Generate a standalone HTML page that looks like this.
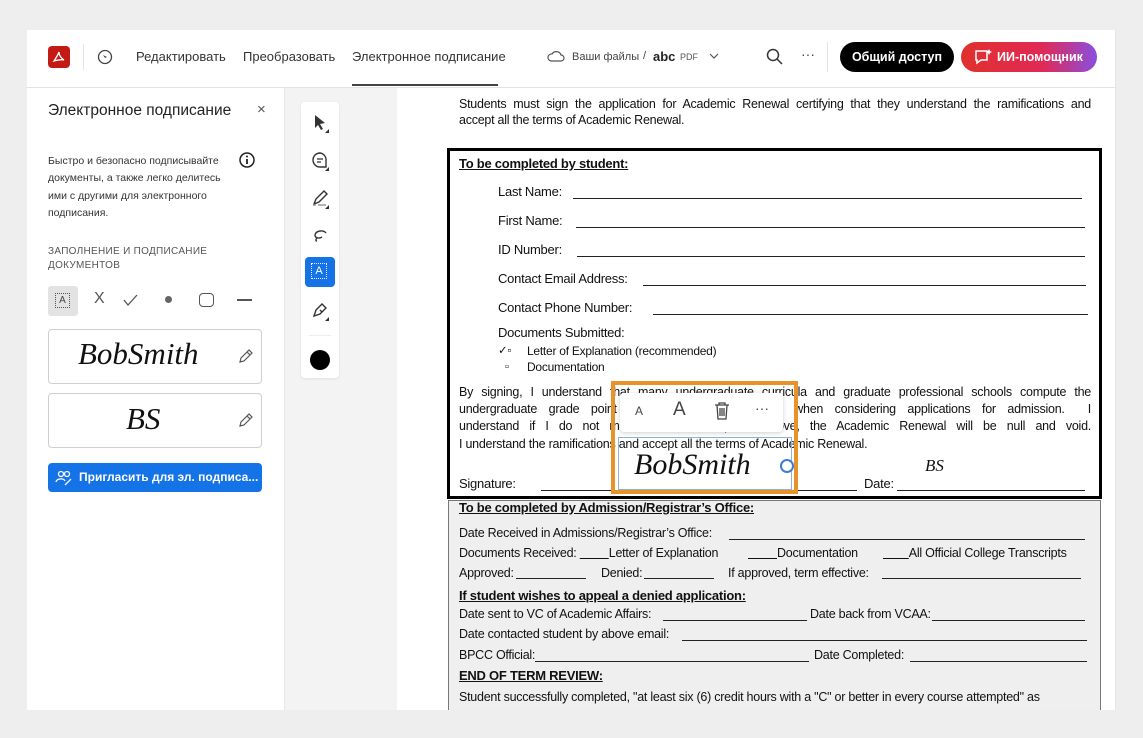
<!DOCTYPE html>
<html><head><meta charset="utf-8">
<style>
*{margin:0;padding:0;box-sizing:border-box}
body{width:1143px;height:738px;background:#eeeeee;font-family:"Liberation Sans",sans-serif;position:relative;overflow:hidden;color:#222}
.a{position:absolute;white-space:nowrap}
.d{position:absolute;white-space:nowrap;font-size:12.5px;letter-spacing:-0.25px;color:#111;line-height:14px}
.u{position:absolute;border-bottom:1px solid #222;height:1px}
.b{font-weight:bold;text-decoration:underline;font-size:13px}
.j{position:absolute;left:459px;width:632px;font-size:12.5px;letter-spacing:-0.25px;text-align:justify;text-align-last:justify;line-height:14px;color:#111;white-space:nowrap;overflow:hidden}
.sig{font-family:"Liberation Serif",serif;font-style:italic;color:#111}
</style></head><body>
<div class="a" style="left:27px;top:30px;width:1089px;height:680px;background:#fff"></div>
<!-- header -->
<div class="a" style="left:27px;top:87px;width:1089px;height:1px;background:#e3e3e3"></div>
<div class="a" style="left:48px;top:46px;width:22px;height:22px;background:#c41a14;border-radius:4px"></div>
<svg class="a" style="left:51px;top:49px" width="16" height="16" viewBox="0 0 16 16"><path d="M3 12c2-3 4-6 5-9 0 3 2 6 5 8-3-1-6 0-10 1z" fill="none" stroke="#fff" stroke-width="1.3"/></svg>
<div class="a" style="left:83px;top:44px;width:1px;height:26px;background:#e5e5e5"></div>
<svg class="a" style="left:97px;top:49px" width="16" height="16"><circle cx="8" cy="8" r="6.5" fill="none" stroke="#444" stroke-width="1.3"/><path d="M6 6l4 2-2 1z" fill="#444"/></svg>
<div class="a" style="left:136px;top:49px;font-size:13px;color:#333">Редактировать</div>
<div class="a" style="left:243px;top:49px;font-size:13px;color:#333">Преобразовать</div>
<div class="a" style="left:352px;top:49px;font-size:13px;color:#333">Электронное подписание</div>
<div class="a" style="left:352px;top:84px;width:146px;height:2px;background:#444"></div>
<svg class="a" style="left:546px;top:49px" width="20" height="14"><path d="M5 12h10a3 3 0 000-6 5 5 0 00-9-1 3.5 3.5 0 00-1 7z" fill="none" stroke="#555" stroke-width="1.2"/></svg>
<div class="a" style="left:572px;top:51px;font-size:11px;color:#444">Ваши файлы</div>
<div class="a" style="left:643px;top:50px;font-size:11px;color:#444">/</div>
<div class="a" style="left:653px;top:49px;font-size:13px;font-weight:bold;color:#222">abc</div>
<div class="a" style="left:680px;top:52px;font-size:9px;color:#555">PDF</div>
<svg class="a" style="left:709px;top:52px" width="10" height="8"><path d="M1 2l4 4 4-4" fill="none" stroke="#555" stroke-width="1.2"/></svg>
<svg class="a" style="left:766px;top:48px" width="18" height="18"><circle cx="7" cy="7" r="5.5" fill="none" stroke="#333" stroke-width="1.5"/><path d="M11 11l5 5" stroke="#333" stroke-width="1.5"/></svg>
<div class="a" style="left:801px;top:46px;font-size:14px;color:#444">···</div>
<div class="a" style="left:827px;top:42px;width:1px;height:30px;background:#e5e5e5"></div>
<div class="a" style="left:840px;top:42px;width:114px;height:30px;background:#000;border-radius:15px;color:#fff;font-size:12.5px;font-weight:bold;text-align:center;line-height:30px">Общий доступ</div>
<div class="a" style="left:961px;top:42px;width:136px;height:30px;background:linear-gradient(90deg,#e0302d,#e02a55 60%,#8a4ee0);border-radius:15px;color:#fff;font-size:12.5px;font-weight:bold;line-height:30px;padding-left:36px">ИИ-помощник</div>
<svg class="a" style="left:974px;top:48px" width="20" height="18"><path d="M2 3h11v9H7l-4 3v-3H2z" fill="none" stroke="#fff" stroke-width="1.5"/><path d="M15 1l1 2 2 1-2 1-1 2-1-2-2-1 2-1z" fill="#fff"/></svg>
<div class="a" style="left:1115px;top:30px;width:1px;height:680px;background:#e5e5e5"></div>
<!-- left panel -->
<div class="a" style="left:285px;top:88px;width:112px;height:622px;background:#f3f3f3"></div>
<div class="a" style="left:284px;top:88px;width:1px;height:622px;background:#e6e6e6"></div>
<div class="a" style="left:48px;top:102px;font-size:15.5px;color:#222">Электронное подписание</div>
<div class="a" style="left:257px;top:101px;font-size:15px;color:#555">×</div>
<div class="a" style="left:48px;top:153px;font-size:10.5px;line-height:17.3px;color:#333">Быстро и безопасно подписывайте<br>документы, а также легко делитесь<br>ими с другими для электронного<br>подписания.</div>
<svg class="a" style="left:238px;top:151px" width="18" height="18"><circle cx="9" cy="9" r="7" fill="none" stroke="#222" stroke-width="1.5"/><path d="M9 8v5" stroke="#222" stroke-width="1.8"/><circle cx="9" cy="5.5" r="1" fill="#222"/></svg>
<div class="a" style="left:48px;top:245px;font-size:10px;line-height:13.5px;color:#555;letter-spacing:0.3px">ЗАПОЛНЕНИЕ И ПОДПИСАНИЕ<br>ДОКУМЕНТОВ</div>
<div class="a" style="left:48px;top:286px;width:30px;height:30px;background:#e3e3e3;border-radius:3px"></div>
<div class="a" style="left:55px;top:293px;width:15px;height:15px;border:1px dotted #555;font-size:10px;text-align:center;line-height:13px;color:#444">A</div>
<div class="a" style="left:94px;top:290px;font-size:16px;color:#555">X</div>
<svg class="a" style="left:123px;top:293px" width="16" height="14"><path d="M1 7l4 5 9-10" fill="none" stroke="#555" stroke-width="1.3"/></svg>
<div class="a" style="left:165px;top:296px;width:7px;height:7px;border-radius:50%;background:#666"></div>
<div class="a" style="left:199px;top:293px;width:15px;height:14px;border:1.5px solid #555;border-radius:4px"></div>
<div class="a" style="left:237px;top:299px;width:15px;height:1.5px;background:#555"></div>
<div class="a" style="left:48px;top:329px;width:214px;height:55px;border:1px solid #cfcfcf;border-radius:4px"></div>
<div class="a sig" style="left:78px;top:336px;font-size:31px">BobSmith</div>
<div class="a" style="left:48px;top:393px;width:214px;height:55px;border:1px solid #cfcfcf;border-radius:4px"></div>
<div class="a sig" style="left:126px;top:401px;font-size:31px">BS</div>
<svg class="a" style="left:238px;top:348px" width="16" height="16"><path d="M2 14l1-4 8-8 3 3-8 8z M9 4l3 3" fill="none" stroke="#555" stroke-width="1.2"/></svg>
<svg class="a" style="left:238px;top:412px" width="16" height="16"><path d="M2 14l1-4 8-8 3 3-8 8z M9 4l3 3" fill="none" stroke="#555" stroke-width="1.2"/></svg>
<div class="a" style="left:48px;top:463px;width:214px;height:29px;background:#1473e6;border-radius:4px;color:#fff;font-size:12px;font-weight:bold;line-height:29px;padding-left:31px">Пригласить для эл. подписа...</div>
<svg class="a" style="left:55px;top:469px" width="18" height="18"><circle cx="6" cy="5" r="2.5" fill="none" stroke="#fff" stroke-width="1.3"/><circle cx="12" cy="5" r="2.5" fill="none" stroke="#fff" stroke-width="1.3"/><path d="M1 13c1-4 8-4 9-1M10 16l6-6" fill="none" stroke="#fff" stroke-width="1.3"/></svg>
<!-- tool rail -->
<div class="a" style="left:301px;top:102px;width:38px;height:276px;background:#fff;border-radius:4px;box-shadow:0 1px 3px rgba(0,0,0,.08)"></div>
<svg class="a" style="left:310px;top:112px" width="22" height="22"><path d="M5 3l10 8-5 1 3 5-2 1-3-5-3 3z" fill="#333"/><path d="M19 17v4h-4z" fill="#333"/></svg>
<svg class="a" style="left:310px;top:150px" width="22" height="22"><path d="M10 3a7 7 0 100 14h6v-6a7 7 0 00-6-8z" fill="none" stroke="#333" stroke-width="1.4"/><path d="M7 9h6M7 12h4" stroke="#333" stroke-width="1.2"/><path d="M19 17v4h-4z" fill="#333"/></svg>
<svg class="a" style="left:310px;top:188px" width="22" height="22"><path d="M4 16l2-5 8-8 3 3-8 8z" fill="none" stroke="#333" stroke-width="1.4"/><path d="M3 17h3M8 17h8" stroke="#999" stroke-width="1.5"/><path d="M19 17v4h-4z" fill="#333"/></svg>
<svg class="a" style="left:310px;top:225px" width="22" height="22"><path d="M16 8c-2-3-10-3-11 2 0 3 4 4 7 2M7 13c-1 1-2 3 0 3" fill="none" stroke="#333" stroke-width="1.4"/></svg>
<div class="a" style="left:305px;top:257px;width:30px;height:30px;background:#1473e6;border-radius:4px"></div>
<div class="a" style="left:311px;top:263px;width:16px;height:16px;border:1.3px dotted #fff;color:#fff;font-size:11px;text-align:center;line-height:14px">A</div>
<svg class="a" style="left:310px;top:300px" width="22" height="22"><path d="M4 16l2-6 6-6 4 4-6 6z M10 10l2 2" fill="none" stroke="#333" stroke-width="1.4"/><path d="M19 17v4h-4z" fill="#333"/></svg>
<div class="a" style="left:309px;top:335px;width:22px;height:1px;background:#eee"></div>
<div class="a" style="left:310px;top:350px;width:20px;height:20px;border-radius:50%;background:#000"></div>
<!-- document -->
<div class="j" style="top:97px">Students must sign the application for Academic Renewal certifying that they understand the ramifications and</div>
<div class="d" style="left:459px;top:113px">accept all the terms of Academic Renewal.</div>
<div class="a" style="left:447px;top:148px;width:655px;height:351px;border:3px solid #000"></div>
<div class="d b" style="left:459px;top:157px">To be completed by student:</div>
<div class="d" style="left:498px;top:185px;font-size:13px">Last Name:</div><div class="u" style="left:573px;top:198px;width:509px"></div>
<div class="d" style="left:498px;top:214px;font-size:13px">First Name:</div><div class="u" style="left:576px;top:227px;width:509px"></div>
<div class="d" style="left:498px;top:243px;font-size:13px">ID Number:</div><div class="u" style="left:577px;top:256px;width:508px"></div>
<div class="d" style="left:498px;top:272px;font-size:13px">Contact Email Address:</div><div class="u" style="left:643px;top:285px;width:443px"></div>
<div class="d" style="left:498px;top:301px;font-size:13px">Contact Phone Number:</div><div class="u" style="left:653px;top:314px;width:435px"></div>
<div class="d" style="left:498px;top:326px;font-size:13px">Documents Submitted:</div>
<div class="d" style="left:498px;top:344px;font-size:11.5px">✓▫</div>
<div class="d" style="left:527px;top:344px;font-size:12px">Letter of Explanation (recommended)</div>
<div class="d" style="left:505px;top:360px;font-size:11px">▫</div>
<div class="d" style="left:527px;top:360px;font-size:12px">Documentation</div>
<div class="j" style="top:385px">By signing, I understand that many undergraduate curricula and graduate professional schools compute the</div>
<div class="j" style="top:402px">undergraduate grade point averages when computed when considering applications for admission.&nbsp; I</div>
<div class="j" style="top:419px">understand if I do not meet standards required above, the Academic Renewal will be null and void.</div>
<div class="d" style="left:459px;top:437px">I understand the ramifications and accept all the terms of Academic Renewal.</div>
<div class="d" style="left:459px;top:477px;font-size:13px">Signature:</div><div class="u" style="left:541px;top:490px;width:316px"></div>
<div class="d" style="left:864px;top:477px;font-size:13px">Date:</div><div class="u" style="left:897px;top:490px;width:188px"></div>
<div class="a sig" style="left:925px;top:456px;font-size:17px">BS</div>
<!-- office box -->
<div class="a" style="left:448px;top:500px;width:653px;height:215px;background:#efefef;border:1px solid #777"></div>
<div class="d b" style="left:459px;top:501px">To be completed by Admission/Registrar’s Office:</div>
<div class="d" style="left:459px;top:526px">Date Received in Admissions/Registrar’s Office:</div><div class="u" style="left:729px;top:539px;width:356px"></div>
<div class="d" style="left:459px;top:546px">Documents Received: <u>&nbsp;&nbsp;&nbsp;&nbsp;&nbsp;&nbsp;&nbsp;&nbsp;&nbsp;</u>Letter of Explanation</div>
<div class="d" style="left:748px;top:546px"><u>&nbsp;&nbsp;&nbsp;&nbsp;&nbsp;&nbsp;&nbsp;&nbsp;&nbsp;</u>Documentation</div>
<div class="d" style="left:883px;top:546px"><u>&nbsp;&nbsp;&nbsp;&nbsp;&nbsp;&nbsp;&nbsp;&nbsp;</u>All Official College Transcripts</div>
<div class="d" style="left:459px;top:566px">Approved:</div><div class="u" style="left:516px;top:578px;width:70px"></div>
<div class="d" style="left:601px;top:566px">Denied:</div><div class="u" style="left:644px;top:578px;width:70px"></div>
<div class="d" style="left:728px;top:566px">If approved, term effective:</div><div class="u" style="left:882px;top:578px;width:199px"></div>
<div class="d b" style="left:459px;top:589px">If student wishes to appeal a denied application:</div>
<div class="d" style="left:459px;top:607px">Date sent to VC of Academic Affairs:</div><div class="u" style="left:663px;top:620px;width:144px"></div>
<div class="d" style="left:810px;top:607px">Date back from VCAA:</div><div class="u" style="left:932px;top:620px;width:153px"></div>
<div class="d" style="left:459px;top:627px">Date contacted student by above email:</div><div class="u" style="left:682px;top:640px;width:405px"></div>
<div class="d" style="left:459px;top:648px">BPCC Official:</div><div class="u" style="left:535px;top:661px;width:274px"></div>
<div class="d" style="left:814px;top:648px">Date Completed:</div><div class="u" style="left:910px;top:661px;width:177px"></div>
<div class="d b" style="left:459px;top:669px">END OF TERM REVIEW:</div>
<div class="d" style="left:459px;top:690px">Student successfully completed, "at least six (6) credit hours with a "C" or better in every course attempted" as</div>
<div class="a" style="left:0;top:710px;width:1143px;height:28px;background:#eeeeee"></div>
<!-- selection overlay -->
<div class="a" style="left:611px;top:381px;width:187px;height:113px;border:4px solid #e8922a"></div>
<div class="a" style="left:620px;top:393px;width:163px;height:39px;background:#fff;border-radius:4px;box-shadow:0 1px 4px rgba(0,0,0,.2)"></div>
<div class="a" style="left:635px;top:404px;font-size:12px;color:#444">A</div>
<div class="a" style="left:673px;top:399px;font-size:19px;color:#444">A</div>
<svg class="a" style="left:713px;top:401px" width="18" height="20"><path d="M2 4h14M6 4V2h6v2M4 4l1 14h8l1-14M7 7v8M9 7v8M11 7v8" fill="none" stroke="#444" stroke-width="1.3"/></svg>
<div class="a" style="left:755px;top:400px;font-size:14px;color:#444">···</div>
<div class="a" style="left:618px;top:437px;width:174px;height:53px;border:1px solid #8fb2d8"></div>
<div class="a sig" style="left:634px;top:448px;font-size:30px">BobSmith</div>
<div class="a" style="left:780px;top:459px;width:14px;height:14px;border:2px solid #3a7ed4;border-radius:50%;background:#fff"></div>
</body></html>
